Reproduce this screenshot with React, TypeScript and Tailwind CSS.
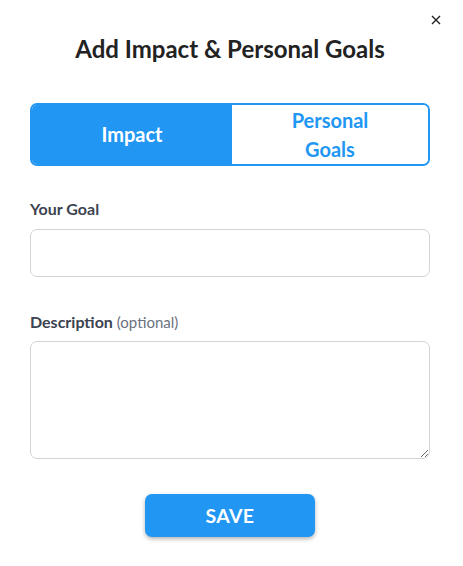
import { useState } from "react"

export default function App() {
  const [tab, setTab] = useState("impact")

  return (
    <div className="relative w-[463px] h-[566px] bg-white pl-[30px] pr-[33px] pt-[34px] font-['Lato',sans-serif] text-[#222]">
      <button className="absolute right-[20px] top-[13px] text-[#222]" aria-label="Close">
        <svg width="14" height="14" viewBox="0 0 14 14" fill="none" stroke="currentColor" strokeWidth="1.4">
          <path d="M3 3l8 8M11 3l-8 8" />
        </svg>
      </button>

      <h2 className="text-center text-[24px] font-bold leading-[30px]">
        Add Impact &amp; Personal Goals
      </h2>

      <div className="mt-[39px] grid h-[63px] grid-cols-[101fr_99fr] overflow-hidden rounded-[7px] border-2 border-[#2196f3]">
        <button
          onClick={() => setTab("impact")}
          className={`flex items-center justify-center text-[20px] font-bold leading-[29px] ${tab === "impact" ? "bg-[#2196f3] text-white" : "bg-white text-[#2196f3]"}`}
        >
          Impact
        </button>
        <button
          onClick={() => setTab("personal")}
          className={`flex items-center justify-center text-[20px] font-bold leading-[29px] ${tab === "personal" ? "bg-[#2196f3] text-white" : "bg-white text-[#2196f3]"}`}
        >
          <span className="w-[100px]">Personal Goals</span>
        </button>
      </div>

      <label className="mt-[33px] block text-[16px] font-bold leading-[20px] text-[#3c4350]">Your Goal</label>
      <input className="mt-[10px] block h-[48px] w-full rounded-[7px] border border-[#d3d3d8] px-3 outline-none" />

      <label className="mt-[35px] block text-[16px] font-bold leading-[20px] text-[#3c4350]">
        Description <span className="text-[15px] font-normal text-[#6b7280]">(optional)</span>
      </label>
      <textarea className="mt-[9px] block h-[118px] w-full rounded-[7px] border border-[#d3d3d8] px-3 py-2 outline-none" />

      <div className="mt-[35px] flex justify-center">
        <button className="h-[43px] w-[170px] rounded-[7px] bg-[#2196f3] text-[19.5px] font-bold tracking-[0.3px] text-white shadow-[0_2px_4px_rgba(0,0,0,0.3)]">
          SAVE
        </button>
      </div>
    </div>
  )
}
